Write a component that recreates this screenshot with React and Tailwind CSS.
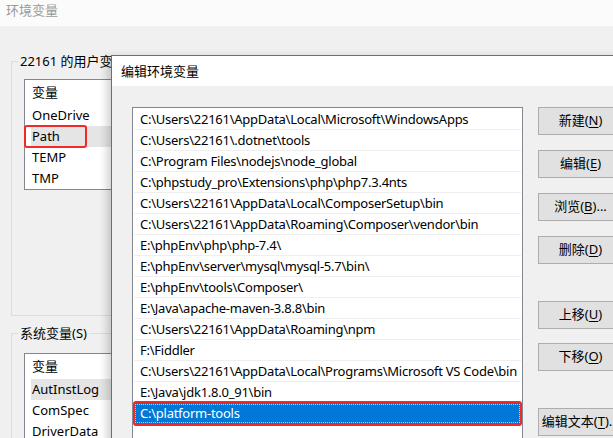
const font = { fontFamily: '"Noto Sans", "Noto Sans CJK SC", sans-serif' };

const userVars = ['OneDrive', 'Path', 'TEMP', 'TMP'];
const sysVars = ['AutInstLog', 'ComSpec', 'DriverData'];

const paths = [
    'C:\\Users\\22161\\AppData\\Local\\Microsoft\\WindowsApps',
    'C:\\Users\\22161\\.dotnet\\tools',
    'C:\\Program Files\\nodejs\\node_global',
    'C:\\phpstudy_pro\\Extensions\\php\\php7.3.4nts',
    'C:\\Users\\22161\\AppData\\Local\\ComposerSetup\\bin',
    'C:\\Users\\22161\\AppData\\Roaming\\Composer\\vendor\\bin',
    'E:\\phpEnv\\php\\php-7.4\\',
    'E:\\phpEnv\\server\\mysql\\mysql-5.7\\bin\\',
    'E:\\phpEnv\\tools\\Composer\\',
    'E:\\Java\\apache-maven-3.8.8\\bin',
    'C:\\Users\\22161\\AppData\\Roaming\\npm',
    'F:\\Fiddler',
    'C:\\Users\\22161\\AppData\\Local\\Programs\\Microsoft VS Code\\bin',
    'E:\\Java\\jdk1.8.0_91\\bin',
    'C:\\platform-tools',
];

const buttons = [
    { label: '新建', key: 'N', mt: 'mt-0' },
    { label: '编辑', key: 'E', mt: 'mt-[15px]' },
    { label: '浏览', key: 'B', tail: '...', mt: 'mt-[15px]' },
    { label: '删除', key: 'D', mt: 'mt-[15px]' },
    { label: '上移', key: 'U', mt: 'mt-[37px]' },
    { label: '下移', key: 'O', mt: 'mt-[14px]' },
    { label: '编辑文本', key: 'T', tail: '...', mt: 'mt-[37px]' },
];

function VarList({ items, selected, marked }) {
    return (
        <div className="ml-[12px] border border-[#828790] bg-white">
            <div className="h-[25px] pl-[7px] pt-[3px] text-[13px] text-black">变量</div>
            {items.map((name) => (
                <div key={name} className="relative h-[21px] pl-[6px]">
                    <div className={`h-full pl-[1px] leading-[21px] text-[13px] text-black ${name === selected ? 'bg-[#e5e5e5]' : ''}`}>
                        {name}
                    </div>
                    {name === marked && (
                        <div className="absolute left-[-1px] top-[-1px] h-[23px] w-[63px] rounded-[3px] border-2 border-[#ee2a2a]" />
                    )}
                </div>
            ))}
        </div>
    );
}

function GroupBox({ title, children, className }) {
    return (
        <div className={`relative border border-[#dcdcdc] ${className}`}>
            <div className="absolute left-[6px] top-[-10px] bg-[#f0f0f0] px-[2px] text-[13px] leading-[18px] text-black">
                {title}
            </div>
            {children}
        </div>
    );
}

export default function App() {
    return (
        <div className="relative h-[438px] w-[613px] overflow-hidden bg-[#f0f0f0]" style={font}>
            {/* Outer window */}
            <div className="h-[26px] bg-[#fbfbfb] pl-[6px] pt-[1px] text-[13px] text-[#9a9a9a]">环境变量</div>
            <div className="pl-[11px] pt-[35px]">
                <GroupBox title="22161 的用户变量" className="h-[255px] w-[680px] pt-[17px]">
                    <div className="h-[176px] overflow-hidden">
                        <VarList items={userVars} selected="Path" marked="Path" />
                    </div>
                </GroupBox>
                <GroupBox title="系统变量(S)" className="mt-[17px] h-[140px] w-[680px] pt-[19px]">
                    <VarList items={sysVars} selected="AutInstLog" />
                </GroupBox>
            </div>

            {/* Edit dialog */}
            <div className="absolute left-[111px] top-[55px] h-[420px] w-[560px] border border-[#6f6f6f] bg-[#f0f0f0] shadow-[-4px_2px_8px_rgba(0,0,0,0.18)]">
                <div className="h-[30px] bg-white pl-[9px] pt-[6px] text-[13px] text-black">编辑环境变量</div>
                <div className="flex pl-[20px] pt-[21px]">
                    <div className="h-[360px] w-[391px] border border-[#828790] bg-white px-[1px] pt-[1px]">
                        {paths.map((p, i) => {
                            const sel = i === paths.length - 1;
                            return (
                                <div key={p} className="relative h-[21px]">
                                    <div
                                        className={`h-full whitespace-nowrap pl-[6px] text-[13px] leading-[20px] tracking-[-0.25px] ${
                                            sel ? 'bg-[#0078d7] text-white outline-1 outline-dotted outline-offset-[-2px] outline-white/70' : 'border-b border-[#efefef] text-black'
                                        }`}
                                    >
                                        {p}
                                    </div>
                                    {sel && (
                                        <div className="absolute left-[-1px] right-[-1px] top-[-2px] bottom-[-2px] rounded-[3px] border-2 border-[#ee2a2a]" />
                                    )}
                                </div>
                            );
                        })}
                    </div>
                    <div className="ml-[15px] flex flex-col">
                        {buttons.map((b) => (
                            <div
                                key={b.key}
                                className={`${b.mt} flex h-[28px] w-[85px] items-center justify-center whitespace-nowrap border border-[#adadad] bg-[#e1e1e1] text-[13px] text-black`}
                            >
                                {b.label}(<span className="underline underline-offset-2">{b.key}</span>){b.tail}
                            </div>
                        ))}
                    </div>
                </div>
            </div>
        </div>
    );
}
